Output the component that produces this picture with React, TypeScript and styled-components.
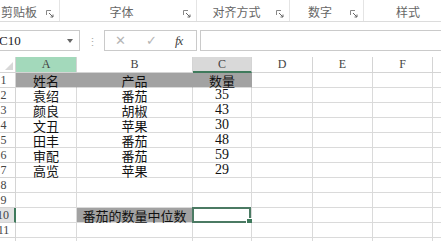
import { Fragment } from 'react';
import styled, { createGlobalStyle } from 'styled-components';

const GlobalStyle = createGlobalStyle`
  html, body {
    margin: 0;
    padding: 0;
    background: #fff;
  }
  body {
    font-family: 'Noto Sans CJK SC', 'Liberation Sans', sans-serif;
  }
`;

const Viewport = styled.div`
  width: 441px;
  height: 241px;
  overflow: hidden;
  background: #fff;
`;

// the screenshot is cropped a little on the left
const Frame = styled.div`
  margin-left: -8px;
  width: 460px;
`;

const Ribbon = styled.div`
  display: flex;
  height: 22px;
  border-bottom: 1px solid #dcdcdc;
  box-sizing: border-box;
  background: #fff;
`;

const Group = styled.div<{ $w: number; $last?: boolean }>`
  display: flex;
  align-items: center;
  width: ${({ $w }) => $w}px;
  flex-shrink: 0;
  padding-top: 3px;
  border-right: ${({ $last }) => ($last ? 'none' : '1px solid #e4e4e4')};
  box-sizing: border-box;
`;

const GroupLabel = styled.span`
  flex: 1;
  text-align: center;
  font-size: 12px;
  color: #666;
  line-height: 16px;
`;

const Launcher = styled.svg`
  width: 8px;
  height: 8px;
  margin: 3px 5px 0 0;
  flex-shrink: 0;
`;

const LauncherIcon = () => (
  <Launcher viewBox="0 0 8 8">
    <path d="M0.5 0.5 H5 M0.5 0.5 V5" stroke="#888" fill="none" />
    <path d="M3 3 L7 7 M7 4.5 V7 H4.5" stroke="#666" fill="none" />
  </Launcher>
);

const FormulaBar = styled.div`
  display: flex;
  align-items: stretch;
  height: 21px;
  margin-top: 8px;
`;

const NameBox = styled.div`
  display: flex;
  align-items: center;
  justify-content: space-between;
  width: 88px;
  border: 1px solid #cacaca;
  border-left: none;
  box-sizing: border-box;
  padding: 0 6px 0 7px;
  font-family: 'Liberation Serif', 'DejaVu Serif', serif;
  font-size: 13px;
  color: #222;
`;

const Caret = styled.span`
  width: 0;
  height: 0;
  border-left: 3px solid transparent;
  border-right: 3px solid transparent;
  border-top: 4px solid #666;
`;

const Grip = styled.div`
  width: 24px;
  display: flex;
  align-items: center;
  justify-content: center;
  color: #aaa;
  font-size: 11px;
`;

const FxBox = styled.div`
  display: flex;
  align-items: center;
  width: 93px;
  border: 1px solid #cacaca;
  box-sizing: border-box;
  padding-left: 10px;
`;

const FxItem = styled.span<{ $w: number; $color: string }>`
  width: ${({ $w }) => $w}px;
  color: ${({ $color }) => $color};
  font-size: 13px;
  font-family: 'Liberation Serif', 'DejaVu Serif', serif;
`;

const FxLabel = styled.span`
  font-family: 'Liberation Serif', 'DejaVu Serif', serif;
  font-style: italic;
  font-size: 13px;
  color: #444;
  letter-spacing: -1px;
`;

const FormulaInput = styled.div`
  flex: 1;
  margin-left: 3px;
  border: 1px solid #cacaca;
  border-right: none;
`;

const Sheet = styled.div`
  display: grid;
  grid-template-columns: 24px 61px 116px 59px 61px 60px 60px 20px;
  grid-template-rows: 16px repeat(12, 15px);
  margin-top: 6px;
`;

const Cell = styled.div<{ $fill?: string }>`
  position: relative;
  box-sizing: border-box;
  border-right: 1px solid ${({ $fill }) => $fill ?? '#dadada'};
  border-bottom: 1px solid #dadada;
  background: ${({ $fill }) => $fill ?? '#fff'};
  display: flex;
  align-items: center;
  justify-content: center;
  font-size: 13px;
  line-height: 1;
  color: #111;
  white-space: nowrap;
`;

const Corner = styled.div`
  position: relative;
  border-right: 1px solid #d4d4d4;
  border-bottom: 1px solid #d4d4d4;
  box-sizing: border-box;
  &::after {
    content: '';
    position: absolute;
    right: 2px;
    bottom: 2px;
    border-left: 8px solid transparent;
    border-bottom: 8px solid #d8d8d8;
  }
`;

const ColHead = styled.div<{ $state?: 'green' | 'active' }>`
  box-sizing: border-box;
  display: flex;
  align-items: center;
  justify-content: center;
  font-family: 'Liberation Serif', 'DejaVu Serif', serif;
  font-size: 12px;
  color: #444;
  border-right: 1px solid #d4d4d4;
  border-bottom: ${({ $state }) =>
    $state === 'active' ? '2px solid #3f7a5c' : '1px solid #d4d4d4'};
  background: ${({ $state }) =>
    $state === 'green' ? '#a3d9bb' : $state === 'active' ? '#d9d9d9' : '#fff'};
`;

const RowHead = styled.div<{ $active?: boolean }>`
  box-sizing: border-box;
  display: flex;
  align-items: center;
  justify-content: center;
  font-family: 'Liberation Serif', 'DejaVu Serif', serif;
  font-size: 12px;
  line-height: 1;
  color: #444;
  border-right: ${({ $active }) => ($active ? '2px solid #3f7a5c' : '1px solid #d4d4d4')};
  border-bottom: 1px solid #d4d4d4;
  background: ${({ $active }) => ($active ? '#e2e2e2' : '#fff')};
`;

const Selection = styled.div`
  position: absolute;
  inset: -1px 0 -1px -1px;
  border: 2px solid #4b7a63;
  pointer-events: none;
  &::after {
    content: '';
    position: absolute;
    right: -4px;
    bottom: -4px;
    width: 5px;
    height: 5px;
    background: #3f7a5c;
    border: 1px solid #fff;
  }
`;

const Num = styled.span`
  font-family: 'Liberation Serif', 'DejaVu Serif', serif;
  font-size: 14px;
`;

const GRAY = '#a2a2a2';
// G is only partly in view, its letter lies off-screen
const columns = ['A', 'B', 'C', 'D', 'E', 'F', ''];

const data: [string, string, string][] = [
  ['袁绍', '番茄', '35'],
  ['颜良', '胡椒', '43'],
  ['文丑', '苹果', '30'],
  ['田丰', '番茄', '48'],
  ['审配', '番茄', '59'],
  ['高览', '苹果', '29'],
];

const groups = [
  { label: '剪贴板', w: 68 },
  { label: '字体', w: 137 },
  { label: '对齐方式', w: 93 },
  { label: '数字', w: 74 },
  { label: '样式', w: 88, last: true },
];

const rows = Array.from({ length: 12 }, (_, i) => i + 1);

const DataCells = ({ r }: { r: number }) => {
  if (r === 1) {
    return (
      <>
        <Cell $fill={GRAY}>姓名</Cell>
        <Cell $fill={GRAY}>产品</Cell>
        <Cell $fill={GRAY}>数量</Cell>
      </>
    );
  }
  if (r >= 2 && r <= 7) {
    const [name, product, qty] = data[r - 2];
    return (
      <>
        <Cell>{name}</Cell>
        <Cell>{product}</Cell>
        <Cell>
          <Num>{qty}</Num>
        </Cell>
      </>
    );
  }
  if (r === 10) {
    return (
      <>
        <Cell />
        <Cell $fill={GRAY}>番茄的数量中位数</Cell>
        <Cell>
          <Selection />
        </Cell>
      </>
    );
  }
  return (
    <>
      <Cell />
      <Cell />
      <Cell />
    </>
  );
};

export default function App() {
  return (
    <Viewport>
      <GlobalStyle />
      <Frame>
        <Ribbon>
          {groups.map((g) => (
            <Group key={g.label} $w={g.w} $last={g.last}>
              <GroupLabel>{g.label}</GroupLabel>
              {!g.last && <LauncherIcon />}
            </Group>
          ))}
        </Ribbon>

        <FormulaBar>
          <NameBox>
            C10
            <Caret />
          </NameBox>
          <Grip>⋮</Grip>
          <FxBox>
            <FxItem $w={31} $color="#b5b5b5">✕</FxItem>
            <FxItem $w={29} $color="#b5b5b5">✓</FxItem>
            <FxLabel>fx</FxLabel>
          </FxBox>
          <FormulaInput />
        </FormulaBar>

        <Sheet>
          <Corner />
          {columns.map((c, i) => (
            <ColHead key={i} $state={c === 'A' ? 'green' : c === 'C' ? 'active' : undefined}>
              {c}
            </ColHead>
          ))}
          {rows.map((r) => (
            <Fragment key={r}>
              <RowHead $active={r === 10}>{r}</RowHead>
              <DataCells r={r} />
              {columns.slice(3).map((c, i) => (
                <Cell key={i} />
              ))}
            </Fragment>
          ))}
        </Sheet>
      </Frame>
    </Viewport>
  );
}
